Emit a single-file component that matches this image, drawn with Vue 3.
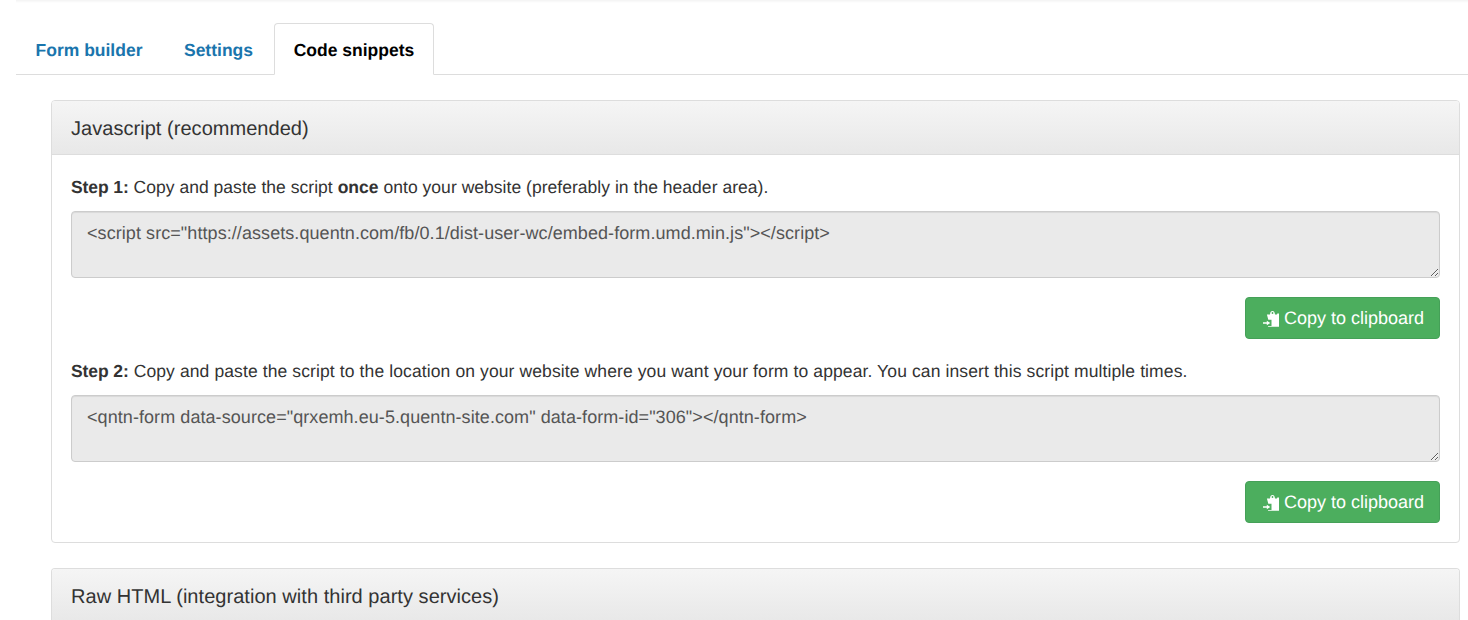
<script setup>
const tabs = [
  { label: 'Form builder', active: false },
  { label: 'Settings', active: false },
  { label: 'Code snippets', active: true },
]
const steps = [
  {
    id: 1,
    code: '<script src="https://assets.quentn.com/fb/0.1/dist-user-wc/embed-form.umd.min.js"><\/script>',
  },
  {
    id: 2,
    code: '<qntn-form data-source="qrxemh.eu-5.quentn-site.com" data-form-id="306"></qntn-form>',
  },
]
</script>

<template>
  <div class="page">
    <div class="topshade"></div>
    <ul class="tabs">
      <li v-for="t in tabs" :key="t.label" class="tab" :class="{ active: t.active }">{{ t.label }}</li>
    </ul>
    <div class="content">
      <section class="panel">
        <header class="panel-head">Javascript (recommended)</header>
        <div class="panel-body">
          <template v-for="s in steps" :key="s.id">
            <p class="step" v-if="s.id === 1"><b class="lead">Step 1:</b> Copy and paste the script <b>once</b> onto your website (preferably in the header area).</p>
            <p class="step long" v-else><b class="lead">Step 2:</b> Copy and paste the script to the location on your website where you want your form to appear. You can insert this script multiple times.</p>
            <textarea class="code" readonly :value="s.code"></textarea>
            <div class="actions">
              <button class="copy" type="button">
                <svg class="ico" viewBox="0 0 16 16" width="16" height="16" aria-hidden="true">
                  <path fill="#fff" fill-rule="evenodd" d="M3.900 3.600H7C7.200 1 8.200 0 9.500 0S11.800 1 12 3.600H14L14.300 2.400H16V15.700H5.200L4.900 14.900H8.500V8.800H5.300ZM9.500 1.100a.9.9 0 1 0 0 1.800.9.9 0 0 0 0-1.800z"/>
                  <path fill="#fff" d="M0 11.300H3.800V9.700L7.300 12L3.800 14.300V12.700H0z"/>
                </svg>
                <span>Copy to clipboard</span>
              </button>
            </div>
          </template>
        </div>
      </section>
      <section class="panel last">
        <header class="panel-head">Raw HTML (integration with third party services)</header>
      </section>
    </div>
  </div>
</template>

<style>
html, body { margin: 0; background: #fff; overflow: hidden; }
</style>

<style scoped>
.page {
  height: 620px;
  overflow: hidden;
  position: relative;
  font-family: "Liberation Sans", Arial, sans-serif;
  font-size: 16px;
  color: #333;
  box-sizing: border-box;
  padding: 23px 0 0 16px;
  text-rendering: geometricPrecision;
}
.topshade {
  position: absolute;
  left: 16px;
  right: 0;
  top: 0;
  height: 3px;
  background: linear-gradient(#f3f3f3, #fff);
}
.tabs {
  list-style: none;
  margin: 0;
  padding: 0;
  display: flex;
  height: 52px;
  box-sizing: border-box;
  border-bottom: 1px solid #ddd;
}
.tab {
  height: 52px;
  width: 146px;
  box-sizing: border-box;
  text-align: center;
  line-height: 55px;
  font-size: 17.5px;
  font-weight: 700;
  color: #1a75ad;
  border-bottom: 1px solid #ddd;
  margin-right: 3px;
}
.tab:nth-child(2) { width: 107px; margin-right: 2px; }
.tab.active {
  width: 160px;
  margin-right: 0;
  color: #000;
  background: #fff;
  border: 1px solid #ddd;
  border-bottom-color: #fff;
  border-radius: 4px 4px 0 0;
  line-height: 53px;
}
.content {
  padding: 25px 8px 0 35px;
}
.panel {
  border: 1px solid #ddd;
  border-radius: 4px;
  margin-bottom: 25px;
  background: #fff;
}
.panel.last { border-bottom: 0; border-radius: 4px 4px 0 0; }
.panel-head {
  height: 54px;
  box-sizing: border-box;
  padding: 0 19px;
  line-height: 56px;
  font-size: 20px;
  letter-spacing: .04px;
  color: #333;
  background: linear-gradient(#f5f5f5, #e8e8e8);
  border-bottom: 1px solid #ddd;
  border-radius: 3px 3px 0 0;
}
.panel-body {
  padding: 20px 19px 19px;
}
.step {
  margin: 0 0 13px;
  height: 23px;
  line-height: 25px;
  font-size: 17.5px;
  letter-spacing: .03px;
  color: #333;
}
.step.long { letter-spacing: .11px; }
.step b { font-weight: 700; }
.step .lead { letter-spacing: -.1px; }
.code {
  display: block;
  width: 100%;
  height: 67px;
  box-sizing: border-box;
  margin: 0;
  padding: 10px 15px;
  font-family: "Liberation Sans", Arial, sans-serif;
  font-size: 18px;
  letter-spacing: .07px;
  line-height: 22px;
  color: #555;
  background: #eaeaea;
  border: 1px solid #ccc;
  border-radius: 4px;
  box-shadow: inset 0 1px 1px rgba(0,0,0,.075);
  outline: none;
  text-rendering: geometricPrecision;
}
.actions {
  display: flex;
  justify-content: flex-end;
  margin: 19px 0 20px;
}
.panel-body > .actions:last-child { margin-bottom: 0; }
.copy {
  display: flex;
  align-items: center;
  justify-content: flex-end;
  gap: 5px;
  width: 195px;
  height: 42px;
  box-sizing: border-box;
  padding: 1px 15px 0 16px;
  font-family: "Liberation Sans", Arial, sans-serif;
  font-size: 18px;
  color: #fff;
  background: #4cae5e;
  border: 1px solid #45a058;
  border-radius: 4px;
  text-rendering: geometricPrecision;
}
.ico { flex: none; }
</style>
